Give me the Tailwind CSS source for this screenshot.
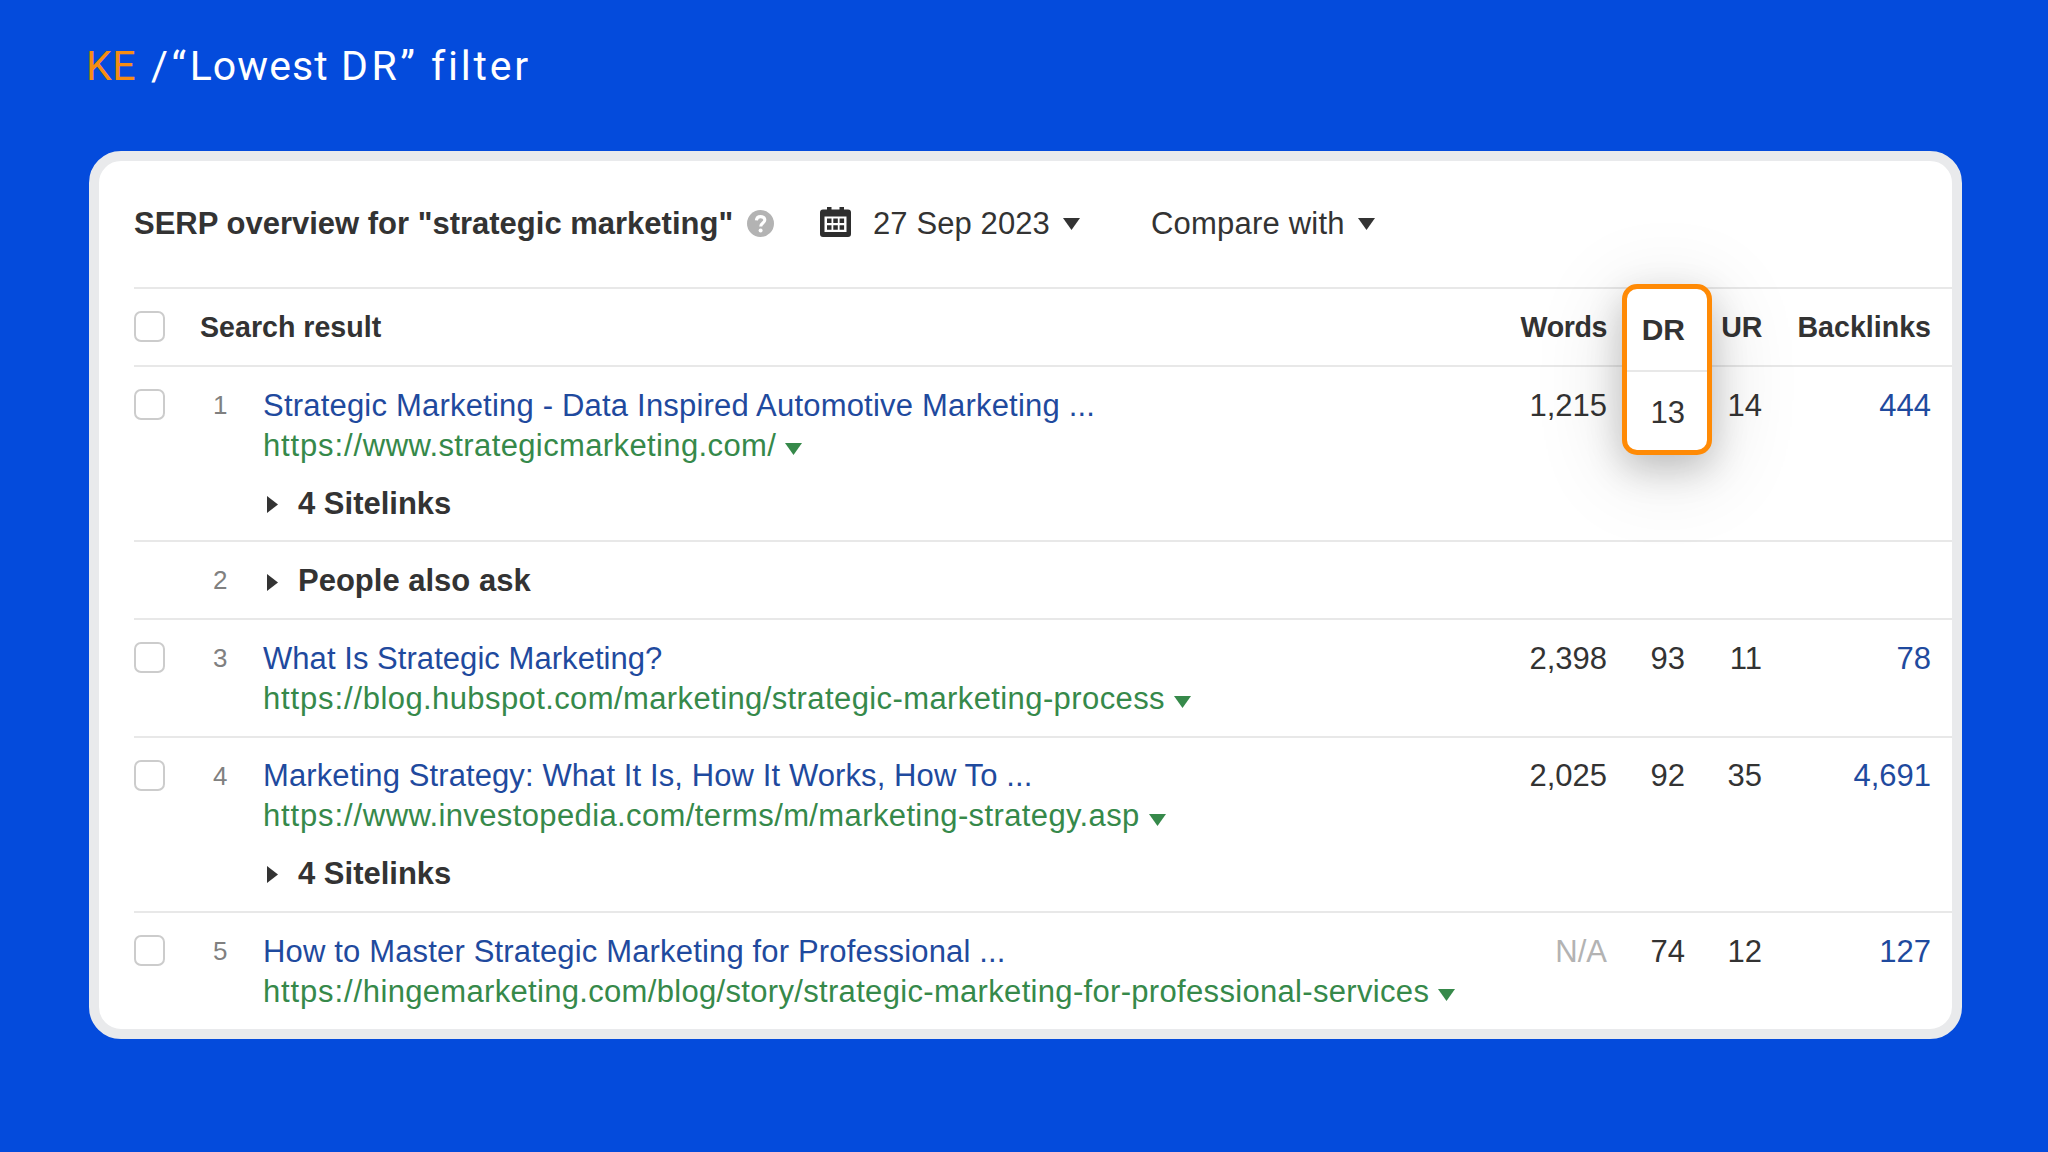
<!DOCTYPE html>
<html lang="en">
<head>
    <meta charset="UTF-8">
    <meta name="viewport" content="width=device-width, initial-scale=1.0">
    <title>KE / "Lowest DR" filter</title>
    <script src="https://cdn.jsdelivr.net/npm/@tailwindcss/browser@4"></script>
</head>
<body class="w-[2048px] h-[1152px] overflow-hidden bg-[#044bdc] pt-[41px] pl-[89px] font-['Liberation_Sans',Arial,sans-serif] text-[31px] leading-10 text-[#333]">
    <!-- Slide title -->
    <h1 class="flex h-[50px] -ml-[3px] font-[Roboto,sans-serif] text-[41px] leading-[50px] text-white whitespace-nowrap">
        <span class="w-[65px] tracking-[0.5px] text-[#f68d12]">KE</span>
        <span class="w-[190px] tracking-[1.1px]"><span class="tracking-[3.6px]">/“</span>Lowest</span>
        <span class="w-[90px] tracking-[3.6px]">DR”</span>
        <span class="tracking-[2.8px]">filter</span>
    </h1>

    <!-- Card -->
    <div class="relative mt-[60px] w-[1873px] h-[888px] rounded-[32px] border-10 border-[#e9eaec] bg-white pl-[35px]">
        <!-- Toolbar -->
        <div class="flex items-center h-[126px] whitespace-nowrap">
            <h2 class="w-[613px] font-bold">SERP overview for "strategic marketing"</h2>
            <svg class="-mt-[2px] w-[27px] h-[27px] shrink-0" viewBox="0 0 27 27">
                <circle cx="13.5" cy="13.5" r="13.5" fill="#b3b3b3"/>
                <path d="M9.4 10.4C9.6 7.9 11.2 6.6 13.6 6.6C16.1 6.6 17.8 8 17.8 10.1C17.8 12.9 13.7 13.2 13.7 16.5" fill="none" stroke="#fff" stroke-width="3.1"/>
                <circle cx="13.6" cy="20.5" r="2" fill="#fff"/>
            </svg>
            <svg class="ml-[46px] -mt-[5px] w-[31px] h-[30px] shrink-0" viewBox="0 0 31 30">
                <path d="M3 2.500H7V0H11.500V2.500H19.500V0H24V2.500H28Q31 2.500 31 5.500V27Q31 30 28 30H3Q0 30 0 27V5.500Q0 2.500 3 2.500Z" fill="#2e2e2e"/>
                <path d="M4.5 9.5H26.500V25H4.500Z" fill="#fff"/>
                <path d="M7 11.500h4.500v4.500H7zM13.300 11.500h4.500v4.500h-4.500zM19.600 11.500h4.500v4.500h-4.500zM7 18.300h4.500v4.500H7zM13.300 18.300h4.500v4.500h-4.500zM19.600 18.300h4.500v4.500h-4.500z" fill="#2e2e2e"/>
            </svg>
            <span class="ml-[22px] w-[190px] tracking-[0.1px]">27 Sep 2023</span>
            <svg class="w-[17px] h-[12px] shrink-0" viewBox="0 0 17 12"><path d="M0 0H17L8.5 12Z" fill="#333"/></svg>
            <span class="ml-[71px] w-[207px] tracking-[0.2px]">Compare with</span>
            <svg class="w-[17px] h-[12px] shrink-0" viewBox="0 0 17 12"><path d="M0 0H17L8.5 12Z" fill="#333"/></svg>
        </div>

        <!-- Table header -->
        <div class="grid grid-cols-[66px_62px_1fr_120px_78px_77px_169px] h-[78px] pr-[21px] pt-[18px] border-t-2 border-[#e8e8e8] text-[28.6px] font-bold">
            <div class="mt-1 size-[31px] rounded-[7px] border-2 border-[#ccc]"></div>
            <div class="col-span-2">Search result</div>
            <div class="text-right tracking-[-0.4px]">Words</div>
            <div></div>
            <div class="text-right tracking-[-0.3px]">UR</div>
            <div class="text-right">Backlinks</div>
        </div>

        <!-- Result 1 -->
        <div class="grid grid-cols-[66px_63px_1fr_120px_78px_77px_169px] h-[175px] pr-[21px] pt-[19px] border-t-2 border-[#e8e8e8]">
            <div class="mt-[3px] size-[31px] rounded-[7px] border-2 border-[#ccc]"></div>
            <div class="-mt-px pl-[13px] text-[26px] text-[#808080]">1</div>
            <div class="whitespace-nowrap">
                <div class="tracking-[0.2px] text-[#1f4a9e]">Strategic Marketing - Data Inspired Automotive Marketing ...</div>
                <div class="flex tracking-[0.38px] text-[#36894a]"><span class="tracking-[0.85px]">https://</span>www.strategicmarketing.com/<svg class="ml-[9px] mt-[17px] w-[17px] h-[12px]" viewBox="0 0 17 12"><path d="M0 0H17L8.5 12Z" fill="#36894a"/></svg></div>
                <div class="flex mt-[18px] font-bold"><svg class="ml-1 mt-3 mr-5 w-[11px] h-[17px]" viewBox="0 0 11 17"><path d="M0 0L11 8.5L0 17Z" fill="#333"/></svg>4 Sitelinks</div>
            </div>
            <div class="text-right">1,215</div>
            <div></div>
            <div class="text-right">14</div>
            <div class="text-right text-[#1f4a9e]">444</div>
        </div>

        <!-- Result 2 -->
        <div class="grid grid-cols-[66px_63px_1fr] h-[78px] pr-[21px] pt-[19px] border-t-2 border-[#e8e8e8]">
            <div></div>
            <div class="-mt-px pl-[13px] text-[26px] text-[#808080]">2</div>
            <div class="flex font-bold"><svg class="ml-1 mt-[13px] mr-5 w-[11px] h-[17px]" viewBox="0 0 11 17"><path d="M0 0L11 8.5L0 17Z" fill="#333"/></svg>People also ask</div>
        </div>

        <!-- Result 3 -->
        <div class="grid grid-cols-[66px_63px_1fr_120px_78px_77px_169px] h-[118px] pr-[21px] pt-[19px] border-t-2 border-[#e8e8e8]">
            <div class="mt-[3px] size-[31px] rounded-[7px] border-2 border-[#ccc]"></div>
            <div class="-mt-px pl-[13px] text-[26px] text-[#808080]">3</div>
            <div class="whitespace-nowrap">
                <div class="tracking-[0.05px] text-[#1f4a9e]">What Is Strategic Marketing?</div>
                <div class="flex tracking-[0.4px] text-[#36894a]"><span class="tracking-[0.85px]">https://</span>blog.hubspot.com/marketing/strategic-marketing-process<svg class="ml-[9px] mt-[17px] w-[17px] h-[12px]" viewBox="0 0 17 12"><path d="M0 0H17L8.5 12Z" fill="#36894a"/></svg></div>
            </div>
            <div class="text-right">2,398</div>
            <div class="text-right">93</div>
            <div class="text-right">11</div>
            <div class="text-right text-[#1f4a9e]">78</div>
        </div>

        <!-- Result 4 -->
        <div class="grid grid-cols-[66px_63px_1fr_120px_78px_77px_169px] h-[175px] pr-[21px] pt-[18px] border-t-2 border-[#e8e8e8]">
            <div class="mt-1 size-[31px] rounded-[7px] border-2 border-[#ccc]"></div>
            <div class="pl-[13px] text-[26px] text-[#808080]">4</div>
            <div class="whitespace-nowrap">
                <div class="tracking-[0.1px] text-[#1f4a9e]">Marketing Strategy: What It Is, How It Works, How To ...</div>
                <div class="flex tracking-[0.38px] text-[#36894a]"><span class="tracking-[0.85px]">https://</span>www.investopedia.com/terms/m/marketing-strategy.asp<svg class="ml-[9px] mt-[18px] w-[17px] h-[12px]" viewBox="0 0 17 12"><path d="M0 0H17L8.5 12Z" fill="#36894a"/></svg></div>
                <div class="flex mt-[18px] font-bold"><svg class="ml-1 mt-3 mr-5 w-[11px] h-[17px]" viewBox="0 0 11 17"><path d="M0 0L11 8.5L0 17Z" fill="#333"/></svg>4 Sitelinks</div>
            </div>
            <div class="text-right">2,025</div>
            <div class="text-right">92</div>
            <div class="text-right">35</div>
            <div class="text-right text-[#1f4a9e]">4,691</div>
        </div>

        <!-- Result 5 -->
        <div class="grid grid-cols-[66px_63px_1fr_120px_78px_77px_169px] h-[117px] pr-[21px] pt-[19px] border-t-2 border-[#e8e8e8]">
            <div class="mt-[3px] size-[31px] rounded-[7px] border-2 border-[#ccc]"></div>
            <div class="-mt-px pl-[13px] text-[26px] text-[#808080]">5</div>
            <div class="whitespace-nowrap">
                <div class="tracking-[0.16px] text-[#1f4a9e]">How to Master Strategic Marketing for Professional ...</div>
                <div class="flex tracking-[0.32px] text-[#36894a]"><span class="tracking-[0.85px]">https://</span>hingemarketing.com/blog/story/strategic-marketing-for-professional-services<svg class="ml-[9px] mt-[17px] w-[17px] h-[12px]" viewBox="0 0 17 12"><path d="M0 0H17L8.5 12Z" fill="#36894a"/></svg></div>
            </div>
            <div class="text-right text-[#b3b3b3]">N/A</div>
            <div class="text-right">74</div>
            <div class="text-right">12</div>
            <div class="text-right text-[#1f4a9e]">127</div>
        </div>

        <!-- Highlighted DR column -->
        <div class="absolute left-[1523px] top-[123px] w-[90px] h-[171px] rounded-[15px] border-5 border-[#ff8a05] bg-white text-right shadow-[0_14px_36px_rgba(0,0,0,0.2),0_14px_90px_rgba(0,0,0,0.14)]">
            <div class="h-[83px] pt-[21px] pr-[22px] border-b-2 border-[#e8e8e8] text-[30px] font-bold">DR</div>
            <div class="pt-[21px] pr-[22px]">13</div>
        </div>
    </div>
</body>
</html>
